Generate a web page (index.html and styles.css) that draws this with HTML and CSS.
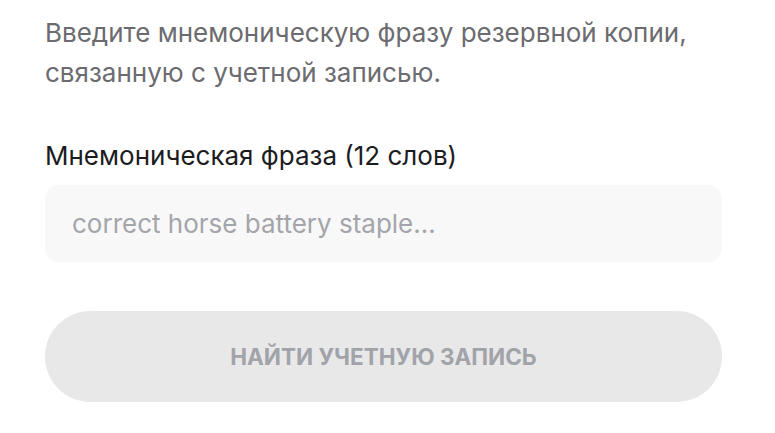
FILE: index.html
```html
<!DOCTYPE html>
<html lang="ru">
<head>
<meta charset="utf-8">
<link rel="stylesheet" href="styles.css">
</head>
<body>
<main class="form">
  <p class="intro">Введите мнемоническую фразу резервной копии, связанную с учетной записью.</p>
  <label class="label" for="phrase">Мнемоническая фраза (12 слов)</label>
  <input class="input" id="phrase" type="text" placeholder="correct horse battery staple...">
  <button class="btn" type="button" disabled>Найти учетную запись</button>
</main>
</body>
</html>
```
FILE: styles.css
```css
* { box-sizing: border-box; }
html, body { margin: 0; background: #ffffff; }
body { font-family: "Inter", "Roboto", sans-serif; }
.form {
  width: 677px;
  margin-left: 45px;
  padding-top: 13px;
  display: flex;
  flex-direction: column;
}
.intro {
  margin: 0;
  font-size: 26px;
  line-height: 40px;
  color: #6b6b70;
  width: 677px;
}
.label {
  margin-top: 43px;
  font-size: 26px;
  line-height: 40px;
  color: #1c1c1e;
}
.input {
  margin-top: 9px;
  height: 77px;
  border: none;
  border-radius: 14px;
  background: #f8f8f9;
  padding: 0 27px;
  font-family: inherit;
  font-size: 26px;
  color: #1c1c1e;
  outline: none;
}
.input::placeholder { color: #a4a5aa; }
.btn {
  margin-top: 49px;
  height: 91px;
  border: none;
  border-radius: 46px;
  background: #e8e8e9;
  font-family: inherit;
  font-weight: 700;
  font-size: 22.5px;
  text-transform: uppercase;
  color: #a2a3a9;
}
```
